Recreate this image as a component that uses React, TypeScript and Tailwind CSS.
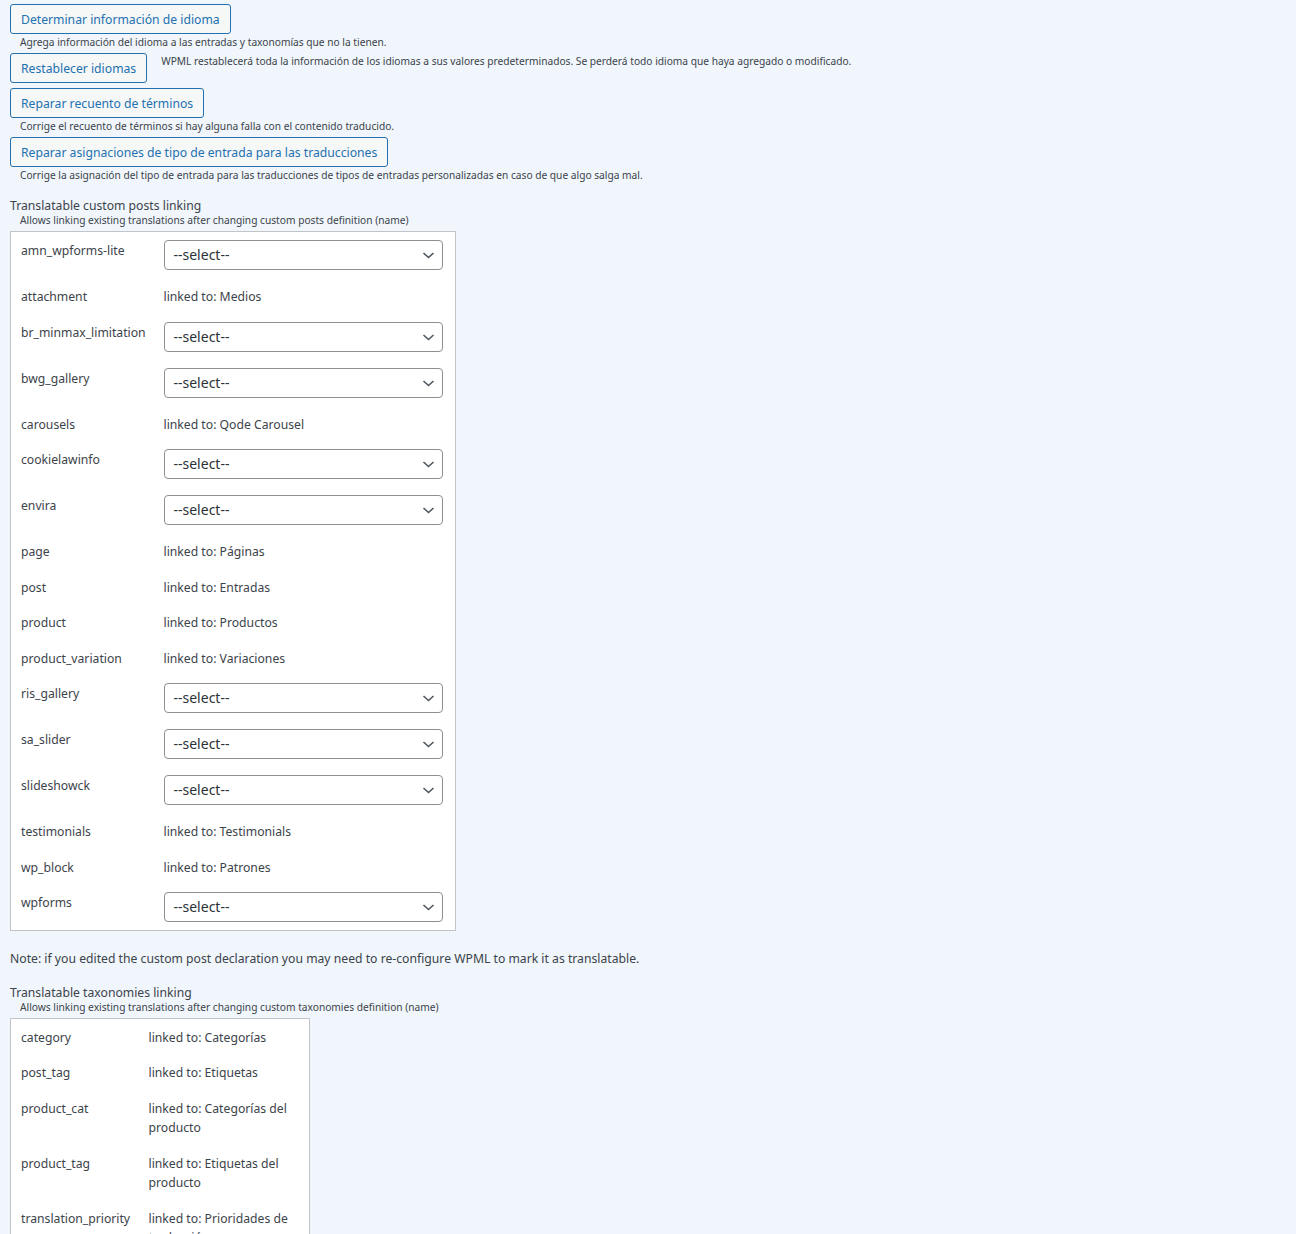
import React from "react";

const font = { fontFamily: '"Noto Sans", "Segoe UI", sans-serif' };

function Btn({ children }: { children: React.ReactNode }) {
  return (
    <button className="h-[30px] px-[10px] border border-[#2271b1] rounded-[3px] bg-[#f6f7f7] text-[#2271b1] text-[12.2px] leading-[29px] whitespace-nowrap">
      {children}
    </button>
  );
}

function Select() {
  return (
    <div className="relative w-[279px] h-[30px] border border-[#8c8f94] rounded-[4px] bg-white flex items-center pl-[9px] text-[14px] text-[#2c3338]">
      <span>--select--</span>
      <svg className="absolute right-[7px] top-[10px]" width="13" height="9" viewBox="0 0 13 9" fill="none">
        <path d="M1.5 2 L6.5 6.5 L11.5 2" stroke="#50575e" strokeWidth="1.6" />
      </svg>
    </div>
  );
}

type Row = { name: string; linked?: string };

const posts: Row[] = [
  { name: "amn_wpforms-lite" },
  { name: "attachment", linked: "Medios" },
  { name: "br_minmax_limitation" },
  { name: "bwg_gallery" },
  { name: "carousels", linked: "Qode Carousel" },
  { name: "cookielawinfo" },
  { name: "envira" },
  { name: "page", linked: "Páginas" },
  { name: "post", linked: "Entradas" },
  { name: "product", linked: "Productos" },
  { name: "product_variation", linked: "Variaciones" },
  { name: "ris_gallery" },
  { name: "sa_slider" },
  { name: "slideshowck" },
  { name: "testimonials", linked: "Testimonials" },
  { name: "wp_block", linked: "Patrones" },
  { name: "wpforms" },
];

const taxes: Row[] = [
  { name: "category", linked: "Categorías" },
  { name: "post_tag", linked: "Etiquetas" },
  { name: "product_cat", linked: "Categorías del producto" },
  { name: "product_tag", linked: "Etiquetas del producto" },
  { name: "translation_priority", linked: "Prioridades de traducción" },
];

export default function App() {
  return (
    <div className="min-h-[1234px] bg-[#f0f6fc] text-[#3c434a] text-[12.2px] leading-[19.5px] pl-[10px] pt-[4px]" style={font}>
      <Btn>Determinar información de idioma</Btn>
      <div className="pl-[10px] text-[10.2px] leading-[14px] mt-[1px] mb-[4px]">
        Agrega información del idioma a las entradas y taxonomías que no la tienen.
      </div>
      <div className="flex items-start">
        <Btn>Restablecer idiomas</Btn>
        <span className="ml-[14px] mt-[1px] text-[10.2px] leading-[14px]">
          WPML restablecerá toda la información de los idiomas a sus valores predeterminados. Se perderá todo idioma que haya agregado o modificado.
        </span>
      </div>
      <div className="mt-[5px]">
        <Btn>Reparar recuento de términos</Btn>
      </div>
      <div className="pl-[10px] text-[10.2px] leading-[14px] mt-[1px] mb-[4px]">
        Corrige el recuento de términos si hay alguna falla con el contenido traducido.
      </div>
      <Btn>Reparar asignaciones de tipo de entrada para las traducciones</Btn>
      <div className="pl-[10px] text-[10.2px] leading-[14px] mt-[1px]">
        Corrige la asignación del tipo de entrada para las traducciones de tipos de entradas personalizadas en caso de que algo salga mal.
      </div>

      <div className="mt-[17px] leading-[14px]">Translatable custom posts linking</div>
      <div className="pl-[10px] text-[10.2px] leading-[14px]">
        Allows linking existing translations after changing custom posts definition (name)
      </div>
      <table className="mt-[4px] w-[446px] table-fixed bg-white border border-[#c3c4c7] border-collapse">
        <tbody>
          {posts.map((r) => (
            <tr key={r.name}>
              <td className="align-top w-[143px] px-[10px] pt-[9px] pb-[7px]">{r.name}</td>
              {r.linked ? (
                <td className="align-top px-[10px] pt-[9px] pb-[7px]">linked to: {r.linked}</td>
              ) : (
                <td className="align-top px-[10px] py-[8px]">
                  <Select />
                </td>
              )}
            </tr>
          ))}
        </tbody>
      </table>

      <div className="mt-[18px]">
        Note: if you edited the custom post declaration you may need to re-configure WPML to mark it as translatable.
      </div>

      <div className="mt-[17px] leading-[14px]">Translatable taxonomies linking</div>
      <div className="pl-[10px] text-[10.2px] leading-[14px]">
        Allows linking existing translations after changing custom taxonomies definition (name)
      </div>
      <table className="mt-[4px] w-[300px] table-fixed bg-white border border-[#c3c4c7] border-collapse">
        <tbody>
          {taxes.map((r) => (
            <tr key={r.name}>
              <td className="align-top w-[128px] px-[10px] pt-[9px] pb-[7px] whitespace-nowrap">{r.name}</td>
              <td className="align-top px-[10px] pt-[9px] pb-[7px]">linked to: {r.linked}</td>
            </tr>
          ))}
        </tbody>
      </table>
    </div>
  );
}
